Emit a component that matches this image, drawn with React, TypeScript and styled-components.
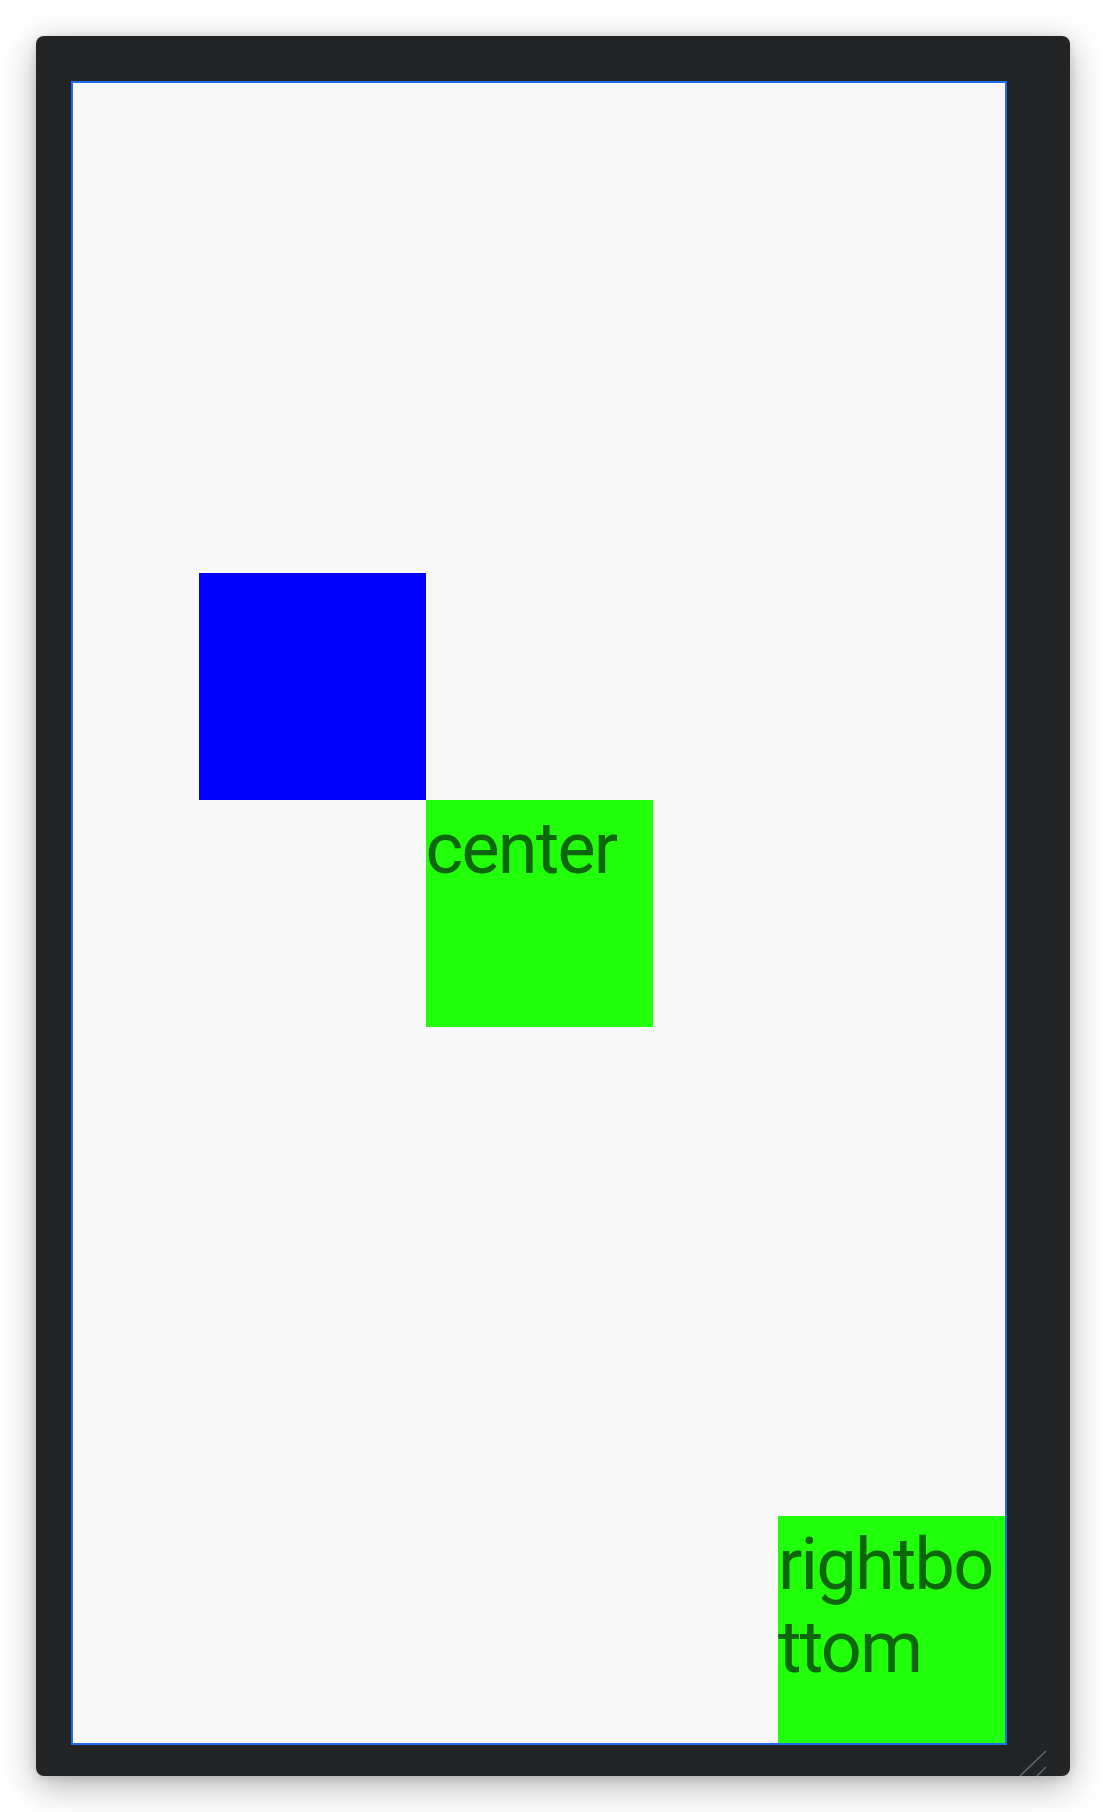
import React from "react";
import styled, { createGlobalStyle } from "styled-components";

const GlobalStyle = createGlobalStyle`
  html, body {
    margin: 0;
    padding: 0;
    background: #ffffff;
  }
  body {
    font-family: Roboto, "Noto Sans", sans-serif;
  }
`;

const Page = styled.div`
  width: 1106px;
  height: 1812px;
  box-sizing: border-box;
  padding: 36px;
  display: flex;
  align-items: flex-start;
`;

const Frame = styled.div`
  position: relative;
  width: 1034px;
  height: 1740px;
  box-sizing: border-box;
  padding: 45px 63px 31px 35px;
  background: #232426;
  border-radius: 8px;
  box-shadow: 0 10px 36px rgba(0, 0, 0, 0.3), 0 2px 10px rgba(0, 0, 0, 0.12);
  display: flex;
`;

const Screen = styled.div`
  flex: 1;
  box-sizing: border-box;
  border: 2px solid #1f6fec;
  background: #f8f8f8;
  display: grid;
  grid-template-columns: 1fr 227px 227px 227px 1fr;
  grid-template-rows: 1fr 227px 227px 227px 1fr;
  overflow: hidden;
`;

const Square = styled.div<{ $color: string; $col: string; $row: string; $end?: boolean }>`
  grid-column: ${(p) => p.$col};
  grid-row: ${(p) => p.$row};
  width: 227px;
  height: 227px;
  box-sizing: border-box;
  padding-top: 7px;
  justify-self: ${(p) => (p.$end ? "end" : "start")};
  align-self: ${(p) => (p.$end ? "end" : "start")};
  background: ${(p) => p.$color};
  color: #0e660a;
  font-family: Roboto, "Noto Sans", sans-serif;
  font-size: 72px;
  letter-spacing: -1.8px;
  line-height: 83px;
  word-break: break-all;
  overflow: hidden;
`;

const ResizeHandle = styled.svg`
  position: absolute;
  right: 22px;
  bottom: 0;
  width: 28px;
  height: 28px;
`;

export default function App() {
  return (
    <>
      <GlobalStyle />
      <Page>
        <Frame>
          <Screen>
            <Square $color="#0000ff" $col="2" $row="2" />
            <Square $color="#22ff0a" $col="3" $row="3">
              center
            </Square>
            <Square $color="#22ff0a" $col="4 / 6" $row="5" $end>
              rightbottom
            </Square>
          </Screen>
          <ResizeHandle viewBox="0 0 28 28">
            <line x1="26" y1="3" x2="0" y2="28" stroke="#6b6c6e" strokeWidth="1.3" />
            <line x1="26" y1="19" x2="17" y2="28" stroke="#6b6c6e" strokeWidth="1.3" />
          </ResizeHandle>
        </Frame>
      </Page>
    </>
  );
}
